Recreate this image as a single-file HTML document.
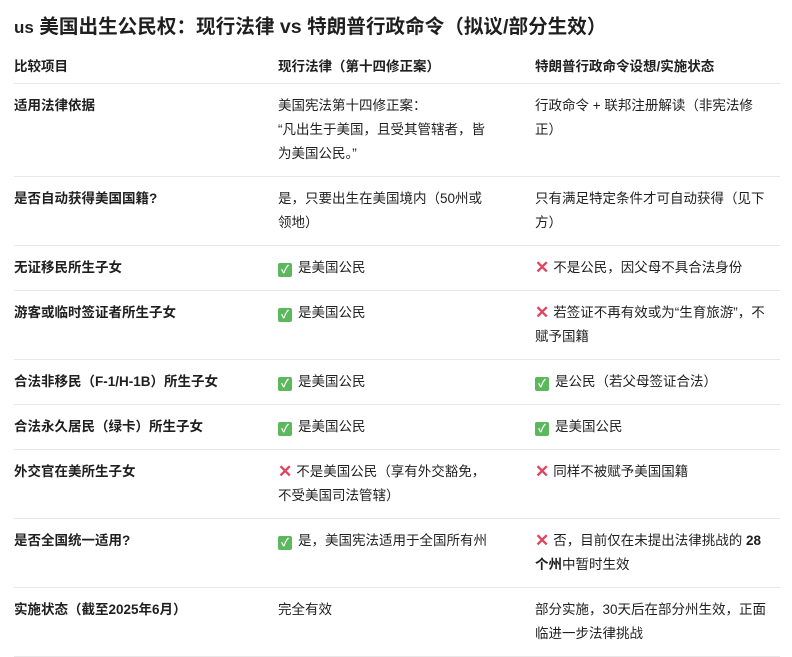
<!DOCTYPE html>
<html><head><meta charset="utf-8"><style>
body{margin:0;background:#fff;font-family:"Liberation Sans","Noto Sans CJK SC",sans-serif;color:#1f1f1f;width:792px;height:657px;overflow:hidden}
h1{font-size:19.6px;font-weight:bold;margin:0;position:absolute;left:14px;top:13px;line-height:28px}
table{position:absolute;left:14px;top:50px;width:766px;border-collapse:collapse;font-size:13.5px;table-layout:fixed}
td,th{text-align:left;vertical-align:top;padding:10px 0 10px 0;line-height:24px;border-bottom:1px solid #e8e8e8}
th{font-weight:bold;padding:5px 0 4px 0;font-size:13.5px}
td:first-child{font-weight:bold}
.c1{width:264px}.c2{width:257px}
td:nth-child(2) div{width:245px}
td:nth-child(3) div{width:237px}
.ck{display:inline-block;width:14px;height:14px;background:#5cb85c;border-radius:2px;color:#fff;font-size:11px;line-height:14px;text-align:center;vertical-align:-1px;margin-right:6px;font-weight:bold}
.x{color:#e0455f;font-weight:bold;font-size:17px;line-height:10px;margin-right:4px;vertical-align:-1px}
</style></head><body>
<h1><span style="font-size:17px">us</span> 美国出生公民权：现行法律 vs 特朗普行政命令（拟议/部分生效）</h1>
<table>
<tr><th class="c1">比较项目</th><th class="c2">现行法律（第十四修正案）</th><th>特朗普行政命令设想/实施状态</th></tr>
<tr><td>适用法律依据</td><td><div>美国宪法第十四修正案：<br>“凡出生于美国，且受其管辖者，皆<br>为美国公民。”</div></td><td><div>行政命令 + 联邦注册解读（非宪法修正）</div></td></tr>
<tr><td>是否自动获得美国国籍?</td><td><div>是，只要出生在美国境内（50州或<br>领地）</div></td><td><div>只有满足特定条件才可自动获得（见下方）</div></td></tr>
<tr><td>无证移民所生子女</td><td><div><span class="ck">✓</span>是美国公民</div></td><td><div><span class="x">✕</span>不是公民，因父母不具合法身份</div></td></tr>
<tr><td>游客或临时签证者所生子女</td><td><div><span class="ck">✓</span>是美国公民</div></td><td><div><span class="x">✕</span>若签证不再有效或为“生育旅游”，不赋予国籍</div></td></tr>
<tr><td>合法非移民（F-1/H-1B）所生子女</td><td><div><span class="ck">✓</span>是美国公民</div></td><td><div><span class="ck">✓</span>是公民（若父母签证合法）</div></td></tr>
<tr><td>合法永久居民（绿卡）所生子女</td><td><div><span class="ck">✓</span>是美国公民</div></td><td><div><span class="ck">✓</span>是美国公民</div></td></tr>
<tr><td>外交官在美所生子女</td><td><div><span class="x">✕</span>不是美国公民（享有外交豁免，<br>不受美国司法管辖）</div></td><td><div><span class="x">✕</span>同样不被赋予美国国籍</div></td></tr>
<tr><td>是否全国统一适用?</td><td><div><span class="ck">✓</span>是，美国宪法适用于全国所有州</div></td><td><div><span class="x">✕</span>否，目前仅在未提出法律挑战的 <b>28 个州</b>中暂时生效</div></td></tr>
<tr><td>实施状态（截至2025年6月）</td><td><div>完全有效</div></td><td><div>部分实施，30天后在部分州生效，正面临进一步法律挑战</div></td></tr>
</table>
</body></html>
